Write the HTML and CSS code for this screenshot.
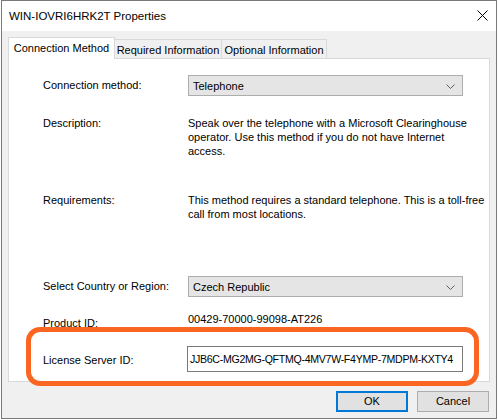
FILE: index.html
```html
<!DOCTYPE html>
<html>
<head>
<meta charset="utf-8">
<link rel="stylesheet" href="styles.css">
</head>
<body>
<div class="window">
  <div class="titlebar">
    <span class="title">WIN-IOVRI6HRK2T Properties</span>
    <svg class="close" width="11" height="11" viewBox="0 0 11 11"><path d="M0.5 0.5 L10.5 10.5 M10.5 0.5 L0.5 10.5" stroke="#000" stroke-width="1" fill="none"/></svg>
  </div>
  <div class="content">
    <div class="tabs">
      <div class="tab active">Connection Method</div>
      <div class="tab t2">Required Information</div>
      <div class="tab t3">Optional Information</div>
    </div>
    <div class="panel">
      <div class="row r1">
        <div class="label">Connection method:</div>
        <div class="combo"><span>Telephone</span><svg width="9" height="5" viewBox="0 0 9 5"><polyline points="0.5,0.5 4.5,4.5 8.5,0.5" fill="none" stroke="#606060" stroke-width="1"/></svg></div>
      </div>
      <div class="row r2">
        <div class="label">Description:</div>
        <div class="text">Speak over the telephone with a Microsoft Clearinghouse<br>operator. Use this method if you do not have Internet<br>access.</div>
      </div>
      <div class="row r3">
        <div class="label">Requirements:</div>
        <div class="text">This method requires a standard telephone. This is a toll-free<br>call from most locations.</div>
      </div>
      <div class="row r4">
        <div class="label">Select Country or Region:</div>
        <div class="combo"><span>Czech Republic</span><svg width="9" height="5" viewBox="0 0 9 5"><polyline points="0.5,0.5 4.5,4.5 8.5,0.5" fill="none" stroke="#606060" stroke-width="1"/></svg></div>
      </div>
      <div class="row r5">
        <div class="label pid">Product ID:</div>
        <div class="text">00429-70000-99098-AT226</div>
      </div>
      <div class="row r6">
        <div class="label">License Server ID:</div>
        <div class="input">JJB6C-MG2MG-QFTMQ-4MV7W-F4YMP-7MDPM-KXTY4</div>
      </div>
    </div>
    <div class="buttons">
      <div class="btn ok">OK</div>
      <div class="btn">Cancel</div>
    </div>
  </div>
  <div class="highlight"></div>
</div>
</body>
</html>
```
FILE: styles.css
```css
html, body {
  margin: 0;
  padding: 0;
  background: #ffffff;
}
body {
  font-family: "Liberation Sans", Arial, sans-serif;
  font-size: 11px;
  color: #000;
}
.window {
  position: relative;
  margin-left: 1px;
  width: 496px;
  height: 419px;
  box-sizing: border-box;
  border: 1px solid #7a7a7a;
  background: #f0f0f0;
  display: flex;
  flex-direction: column;
}
.titlebar {
  height: 30px;
  background: #ffffff;
  display: flex;
  align-items: center;
  justify-content: space-between;
  padding-left: 7px;
  padding-right: 8px;
}
.title {
  font-size: 11.5px;
  margin-top: -1px;
}
.close {
  display: block;
  margin-top: -2px;
}
.content {
  padding: 6px 6px 0 6px;
  display: flex;
  flex-direction: column;
}
.tabs {
  display: flex;
  align-items: flex-end;
  height: 21px;
  position: relative;
  z-index: 1;
}
.tab {
  box-sizing: border-box;
  height: 19px;
  border: 1px solid #d9d9d9;
  border-bottom: none;
  border-left: none;
  background: #f0f0f0;
  text-align: center;
  line-height: 18px;
  padding-top: 1px;
}
.tab.active {
  height: 22px;
  width: 107px;
  border-left: 1px solid #d9d9d9;
  background: #ffffff;
  margin-bottom: -1px;
  line-height: 20px;
  padding-top: 0;
}
.tab.t2 { width: 107px; }
.tab.t3 { width: 105px; }
.panel {
  box-sizing: border-box;
  height: 324px;
  border: 1px solid #d9d9d9;
  background: #ffffff;
  padding: 16px 0 0 34px;
}
.row {
  display: flex;
  align-items: flex-start;
}
.label {
  width: 145px;
  flex: none;
  line-height: 14px;
}
.text {
  line-height: 14px;
}
.combo {
  box-sizing: border-box;
  width: 275px;
  height: 21px;
  background: #e5e5e5;
  border: 1px solid #adadad;
  display: flex;
  align-items: center;
  justify-content: space-between;
  padding: 0 7px 0 4px;
}
.combo span { line-height: 14px; }
.combo svg { display: block; margin-top: 1px; }
.r1 .label, .r4 .label { padding-top: 3px; }
.r2 { margin-top: 20px; }
.r3 { margin-top: 35px; }
.r4 { margin-top: 55px; }
.r5 { margin-top: 15px; }
.r5 .label { padding-top: 4px; }
.r6 { margin-top: 16px; }
.r6 .label { padding-top: 7px; }
.input {
  box-sizing: border-box;
  width: 276px;
  height: 26px;
  margin-left: -1px;
  border: 1px solid #7a7a7a;
  background: #fff;
  padding: 5px 0 0 2px;
  line-height: 14px;
  font-size: 10.6px;
  letter-spacing: -0.3px;
  white-space: nowrap;
  overflow: hidden;
}
.buttons {
  display: flex;
  justify-content: flex-end;
  gap: 9px;
  margin-top: 9px;
  padding-right: 1px;
}
.btn {
  box-sizing: border-box;
  width: 72px;
  height: 21px;
  background: #e1e1e1;
  border: 1px solid #adadad;
  text-align: center;
  line-height: 19px;
}
.btn.ok {
  border: 1px solid #0078d7;
  box-shadow: inset 0 0 0 1px #0078d7;
}
.highlight {
  position: absolute;
  left: 24px;
  top: 326px;
  width: 453px;
  height: 59px;
  box-sizing: border-box;
  border: 5px solid #fa6622;
  border-radius: 14px;
  pointer-events: none;
}
```
